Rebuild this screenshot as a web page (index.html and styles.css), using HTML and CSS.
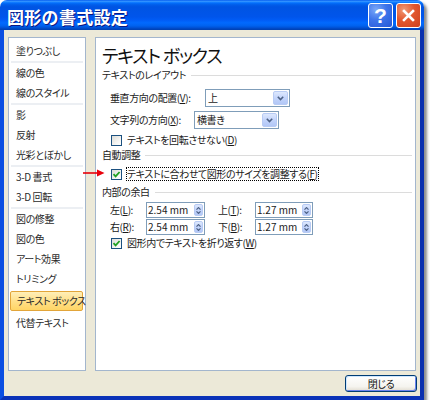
FILE: index.html
```html
<!DOCTYPE html>
<html lang="ja">
<head>
<meta charset="utf-8">
<title>図形の書式設定</title>
<link rel="stylesheet" href="styles.css">
</head>
<body>
<div class="window">
  <div class="titlebar">
    <span class="title">図形の書式設定</span>
    <div class="caption-buttons">
      <span class="cbtn help">?</span>
      <span class="cbtn close"><svg width="13" height="13" viewBox="0 0 13 13"><path d="M2 2 L11 11 M11 2 L2 11" stroke="#fff" stroke-width="2.6" stroke-linecap="square"/></svg></span>
    </div>
  </div>
  <div class="frame">
    <div class="panels">
      <ul class="nav">
        <li class="item">塗りつぶし</li>
        <li class="sep"></li>
        <li class="item">線の色</li>
        <li class="item">線のスタイル</li>
        <li class="sep"></li>
        <li class="item">影</li>
        <li class="item">反射</li>
        <li class="item">光彩とぼかし</li>
        <li class="sep"></li>
        <li class="item">3-D 書式</li>
        <li class="item">3-D 回転</li>
        <li class="sep"></li>
        <li class="item">図の修整</li>
        <li class="item">図の色</li>
        <li class="item">アート効果</li>
        <li class="item">トリミング</li>
        <li class="item selected">テキスト ボックス</li>
        <li class="item">代替テキスト</li>
      </ul>
      <div class="pane">
        <div class="pane-title">テキスト ボックス</div>
        <div class="hdr">テキストのレイアウト</div>
        <div class="row row-combo first">
          <span class="lbl lbl-valign">垂直方向の配置(<u>V</u>):</span>
          <span class="combo"><span class="combo-text">上</span><span class="combo-btn"><svg width="7" height="5" viewBox="0 0 7 5"><path d="M0.8 0.8 L3.5 3.5 L6.2 0.8" fill="none" stroke="#4D6185" stroke-width="1.6"/></svg></span></span>
        </div>
        <div class="row row-combo">
          <span class="lbl lbl-dir">文字列の方向(<u>X</u>):</span>
          <span class="combo"><span class="combo-text">横書き</span><span class="combo-btn"><svg width="7" height="5" viewBox="0 0 7 5"><path d="M0.8 0.8 L3.5 3.5 L6.2 0.8" fill="none" stroke="#4D6185" stroke-width="1.6"/></svg></span></span>
        </div>
        <div class="row row-check first-check">
          <span class="checkbox"></span>
          <span class="chk-label">テキストを回転させない(<u>D</u>)</span>
        </div>
        <div class="hdr">自動調整</div>
        <div class="row row-check auto-check">
          <span class="checkbox"><svg width="9" height="9" viewBox="0 0 9 9"><path d="M1.5 4.2 L3.6 6.4 L7.6 2" fill="none" stroke="#21A121" stroke-width="1.8"/></svg></span>
          <span class="chk-label focused">テキストに合わせて図形のサイズを調整する(<u>F</u>)</span>
        </div>
        <div class="hdr hdr-margin">内部の余白</div>
        <div class="row row-spin first-spin">
          <span class="lbl lbl-l">左(<u>L</u>):</span>
          <span class="spin spin-l"><span class="spin-text">2.54 mm</span><span class="spin-btn"><svg width="5" height="3" viewBox="0 0 5 3"><path d="M0.5 2.6 L2.5 0.6 L4.5 2.6" fill="none" stroke="#4D6185" stroke-width="1.2"/></svg><svg width="5" height="3" viewBox="0 0 5 3"><path d="M0.5 0.4 L2.5 2.4 L4.5 0.4" fill="none" stroke="#4D6185" stroke-width="1.2"/></svg></span></span>
          <span class="lbl lbl-r">上(<u>T</u>):</span>
          <span class="spin spin-r"><span class="spin-text">1.27 mm</span><span class="spin-btn"><svg width="5" height="3" viewBox="0 0 5 3"><path d="M0.5 2.6 L2.5 0.6 L4.5 2.6" fill="none" stroke="#4D6185" stroke-width="1.2"/></svg><svg width="5" height="3" viewBox="0 0 5 3"><path d="M0.5 0.4 L2.5 2.4 L4.5 0.4" fill="none" stroke="#4D6185" stroke-width="1.2"/></svg></span></span>
        </div>
        <div class="row row-spin">
          <span class="lbl lbl-l">右(<u>R</u>):</span>
          <span class="spin spin-l"><span class="spin-text">2.54 mm</span><span class="spin-btn"><svg width="5" height="3" viewBox="0 0 5 3"><path d="M0.5 2.6 L2.5 0.6 L4.5 2.6" fill="none" stroke="#4D6185" stroke-width="1.2"/></svg><svg width="5" height="3" viewBox="0 0 5 3"><path d="M0.5 0.4 L2.5 2.4 L4.5 0.4" fill="none" stroke="#4D6185" stroke-width="1.2"/></svg></span></span>
          <span class="lbl lbl-r">下(<u>B</u>):</span>
          <span class="spin spin-r"><span class="spin-text">1.27 mm</span><span class="spin-btn"><svg width="5" height="3" viewBox="0 0 5 3"><path d="M0.5 2.6 L2.5 0.6 L4.5 2.6" fill="none" stroke="#4D6185" stroke-width="1.2"/></svg><svg width="5" height="3" viewBox="0 0 5 3"><path d="M0.5 0.4 L2.5 2.4 L4.5 0.4" fill="none" stroke="#4D6185" stroke-width="1.2"/></svg></span></span>
        </div>
        <div class="row row-check wrap-check">
          <span class="checkbox"><svg width="9" height="9" viewBox="0 0 9 9"><path d="M1.5 4.2 L3.6 6.4 L7.6 2" fill="none" stroke="#21A121" stroke-width="1.8"/></svg></span>
          <span class="chk-label">図形内でテキストを折り返す(<u>W</u>)</span>
        </div>
      </div>
    </div>
    <div class="footer">
      <button class="btn">閉じる</button>
    </div>
  </div>
  <svg class="arrow" width="22" height="8" viewBox="0 0 22 8"><path d="M0 4 H16" stroke="#E8000B" stroke-width="1.6"/><path d="M14 0.5 L21.5 4 L14 7.5 Z" fill="#E8000B"/></svg>
</div>
</body>
</html>
```

FILE: styles.css
```css
html, body {
  margin: 0;
  padding: 0;
  background: #ffffff;
}

body {
  font-family: "Noto Sans CJK JP", "Noto Sans", sans-serif;
  font-size: 10px;
  letter-spacing: -0.4px;
  color: #1a1a1a;
  font-feature-settings: "palt";
}

u {
  text-decoration: underline;
  text-underline-offset: 1px;
}

.window {
  position: relative;
  width: 424px;
  height: 400px;
  display: flex;
  flex-direction: column;
  border-radius: 7px 7px 0 0;
  box-shadow: 3px 3px 3px rgba(0, 0, 0, 0.45);
}

/* ---------- title bar ---------- */
.titlebar {
  height: 30px;
  box-sizing: border-box;
  display: flex;
  align-items: flex-start;
  justify-content: space-between;
  padding: 0 3px 0 7px;
  border-radius: 7px 7px 0 0;
  background: linear-gradient(to bottom,
    #0058ee 0%, #3593ff 4%, #288eff 6%, #127dff 8%, #036ffc 10%,
    #0262ee 14%, #0057e5 20%, #0054e3 24%, #0055eb 56%, #005bf5 66%,
    #026afe 76%, #0062ef 86%, #0052d6 92%, #0046c0 96%, #0040b0 100%);
}

.title {
  margin-top: 5px;
  font-size: 17px;
  line-height: 24px;
  font-weight: bold;
  letter-spacing: 0.3px;
  color: #fff;
  text-shadow: 1px 1px 0 #0a1883;
  font-feature-settings: normal;
}

.caption-buttons {
  display: flex;
  gap: 3px;
  margin-top: 3px;
}

.cbtn {
  width: 25px;
  height: 25px;
  box-sizing: border-box;
  border: 1px solid #fff;
  border-radius: 3px;
  display: flex;
  align-items: center;
  justify-content: center;
}

.help {
  background: radial-gradient(circle at 30% 25%, #7aa8f8 0%, #3d74ea 45%, #2656d6 100%);
  color: #fff;
  font-family: "Liberation Sans", sans-serif;
  font-weight: bold;
  font-size: 21px;
  letter-spacing: 0;
  line-height: 1;
}

.close {
  background: radial-gradient(circle at 30% 25%, #f29a76 0%, #e2572e 45%, #cc3f1c 100%);
}

/* ---------- frame & client ---------- */
.frame {
  flex: 1;
  display: flex;
  flex-direction: column;
  background: #ece9d8;
  border-left: 4px solid #0b4fe2;
  border-right: 4px solid #0a2fae;
  border-bottom: 4px solid #0a32b8;
  padding: 7px 4px 4px 4px;
}

.panels {
  height: 334px;
  display: flex;
  gap: 9px;
}

/* ---------- left navigation ---------- */
.nav {
  list-style: none;
  margin: 0;
  width: 78px;
  box-sizing: border-box;
  border: 1px solid #a3b6cd;
  background: #fff;
  padding: 3px 0 0 0;
}

.item {
  height: 20px;
  line-height: 20px;
  padding-left: 7px;
  white-space: nowrap;
  color: #2a2a2a;
}

.item.selected {
  box-sizing: border-box;
  margin: 2px 2px 2px 1px;
  padding-left: 6px;
  line-height: 18px;
  border: 1px solid #e2a53a;
  border-radius: 2px;
  background: linear-gradient(to bottom, #ffefb8 0%, #ffe08a 50%, #ffd565 100%);
}

.sep {
  height: 2px;
  margin: 0 2px;
  background: #eceff3;
}

/* ---------- right pane ---------- */
.pane {
  flex: 1;
  box-sizing: border-box;
  border: 1px solid #a3b6cd;
  background: #fff;
  padding: 5px 3px 0 6px;
}

.pane-title {
  font-size: 18px;
  letter-spacing: -1.2px;
  line-height: 24px;
  height: 24px;
  color: #111;
}

.hdr {
  display: flex;
  align-items: center;
  height: 16px;
  line-height: 16px;
  white-space: nowrap;
}

.hdr::after {
  content: "";
  flex: 1;
  height: 1px;
  margin-left: 5px;
  background: #dcdcdc;
}

.hdr-margin {
  margin-top: 2px;
}

.row {
  display: flex;
  align-items: center;
  margin-left: 8px;
  white-space: nowrap;
}

.row-combo {
  height: 18px;
  margin-top: 4px;
}

.row-combo.first {
  margin-top: 6px;
}

.row-check {
  height: 16px;
}

.first-check {
  height: 14px;
  margin-top: 4px;
}

.auto-check {
  margin-top: 3px;
}

.row-spin {
  height: 16px;
  margin-top: 1px;
}

.row-spin.first-spin {
  margin-top: 2px;
}

.lbl {
  line-height: 16px;
}

.lbl-valign { width: 95px; }
.lbl-dir { width: 84px; }
.lbl-l { width: 36px; }
.lbl-r { width: 37px; margin-left: 13px; }

/* combo box */
.combo {
  width: 85px;
  height: 18px;
  box-sizing: border-box;
  border: 1px solid #7f9db9;
  background: #fff;
  display: flex;
  align-items: center;
}

.combo-text {
  flex: 1;
  padding-left: 2px;
  line-height: 16px;
}

.combo-btn {
  width: 15px;
  height: 14px;
  margin-right: 1px;
  box-sizing: border-box;
  border: 1px solid #b8cbf4;
  border-radius: 2px;
  background: linear-gradient(to bottom, #dde8fd 0%, #c3d4fb 50%, #b2c7f6 100%);
  display: flex;
  align-items: center;
  justify-content: center;
}

/* spin box */
.spin {
  height: 16px;
  box-sizing: border-box;
  border: 1px solid #7f9db9;
  background: #fff;
  display: flex;
  align-items: center;
}

.spin-l { width: 59px; }
.spin-r { width: 58px; }

.spin-text {
  flex: 1;
  padding-left: 1px;
  line-height: 14px;
  letter-spacing: 0;
}

.spin-btn {
  width: 9px;
  height: 12px;
  margin-right: 1px;
  box-sizing: border-box;
  border: 1px solid #b8cbf4;
  border-radius: 2px;
  background: linear-gradient(to bottom, #dde8fd 0%, #c3d4fb 50%, #b2c7f6 100%);
  display: flex;
  flex-direction: column;
  align-items: center;
  justify-content: center;
  gap: 1px;
}

.spin-btn svg {
  display: block;
}

/* checkbox */
.checkbox {
  width: 11px;
  height: 11px;
  margin-left: 1px;
  box-sizing: border-box;
  border: 1px solid #1c5180;
  background: linear-gradient(135deg, #dcdcd7 0%, #f4f4f2 60%, #ffffff 100%);
  display: flex;
  align-items: center;
  justify-content: center;
}

.checkbox svg {
  display: block;
}

.chk-label {
  margin-left: 5px;
  line-height: 14px;
}

.chk-label.focused {
  margin-left: 4px;
  padding: 0 1px;
  outline: 1px dotted #000;
  outline-offset: -1px;
  border: 0;
}

/* footer */
.footer {
  display: flex;
  justify-content: flex-end;
  margin-top: 4px;
  margin-right: -1px;
}

.btn {
  width: 72px;
  height: 17px;
  box-sizing: border-box;
  padding: 0;
  border: 1px solid #003c74;
  border-radius: 3px;
  background: linear-gradient(to bottom, #ffffff 0%, #f5f4ef 70%, #e2ddd1 100%);
  box-shadow: inset 1px 1px 0 #cee7ff, inset -1px -1px 0 #6982ee;
  font-family: "Noto Sans CJK JP", "Noto Sans", sans-serif;
  font-size: 10px;
  letter-spacing: -0.4px;
  line-height: 14px;
  color: #111;
  font-feature-settings: "palt";
}

/* annotation arrow */
.arrow {
  position: absolute;
  left: 83px;
  top: 169px;
}
```
